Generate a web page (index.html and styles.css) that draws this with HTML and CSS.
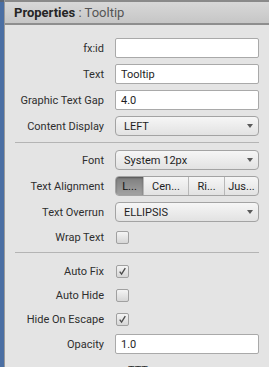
FILE: index.html
```html
<!DOCTYPE html>
<html>
<head>
<meta charset="utf-8">
<link rel="stylesheet" href="styles.css">
</head>
<body>
<div class="strip"></div>
<div class="panel">
  <div class="header"><span class="title">Properties</span><span class="sub"> : Tooltip</span></div>
  <div class="content">
    <div class="row"><label class="lbl">fx:id</label><div class="field"></div></div>
    <div class="row"><label class="lbl">Text</label><div class="field">Tooltip</div></div>
    <div class="row"><label class="lbl">Graphic Text Gap</label><div class="field">4.0</div></div>
    <div class="row"><label class="lbl">Content Display</label><div class="combo"><span>LEFT</span><i class="arrow"></i></div></div>
    <div class="sep"></div>
    <div class="row"><label class="lbl">Font</label><div class="combo"><span>System 12px</span><i class="arrow"></i></div></div>
    <div class="row"><label class="lbl">Text Alignment</label>
      <div class="seg">
        <span class="sb on w1">L...</span><span class="sb w2">Cen...</span><span class="sb w3">Ri...</span><span class="sb w4">Jus...</span>
      </div>
    </div>
    <div class="row"><label class="lbl">Text Overrun</label><div class="combo"><span>ELLIPSIS</span><i class="arrow"></i></div></div>
    <div class="row crow"><label class="lbl">Wrap Text</label><div class="check"></div></div>
    <div class="sep sep2"></div>
    <div class="row crow"><label class="lbl">Auto Fix</label><div class="check"><svg viewBox="0 0 13 13" width="13" height="13"><path d="M3.2 6.6 L5.4 9.6 L9.8 2.6" fill="none" stroke="#4a4a4a" stroke-width="1.6"/></svg></div></div>
    <div class="row crow"><label class="lbl">Auto Hide</label><div class="check"></div></div>
    <div class="row crow"><label class="lbl">Hide On Escape</label><div class="check"><svg viewBox="0 0 13 13" width="13" height="13"><path d="M3.2 6.6 L5.4 9.6 L9.8 2.6" fill="none" stroke="#4a4a4a" stroke-width="1.6"/></svg></div></div>
    <div class="row"><label class="lbl">Opacity</label><div class="field">1.0</div></div>
    <div class="row"><label class="lbl"></label><div class="more">TTT</div></div>
  </div>
</div>
</body>
</html>
```
FILE: styles.css
```css
html, body {
  margin: 0;
  padding: 0;
}
body {
  width: 269px;
  height: 367px;
  overflow: hidden;
  display: flex;
  background: #e4e4e4;
  font-family: Roboto, "Liberation Sans", sans-serif;
  font-size: 11px;
  color: #2e2e2e;
}
.strip {
  width: 4px;
  flex: none;
  background: #4b6fa3;
  border-top: 2px solid #5a6676;
}
.panel {
  flex: 1;
  border-left: 1px solid #9a9a9a;
  display: flex;
  flex-direction: column;
}
.header {
  height: 21px;
  border-top: 2px solid #8a8a8a;
  border-bottom: 2px solid #8e8e8e;
  background: linear-gradient(#d8d8d8, #c6c6c6);
  padding-left: 9px;
  display: flex;
  align-items: center;
  font-size: 13px;
  flex: none;
}
.title {
  font-weight: bold;
  color: #262626;
}
.sub {
  color: #555;
  white-space: pre;
}
.content {
  padding-top: 10px;
  display: flex;
  flex-direction: column;
}
.row {
  height: 26px;
  flex: none;
  display: grid;
  grid-template-columns: 99px 144px;
  column-gap: 11px;
  align-items: center;
}
.crow {
  height: 24px;
}
.lbl {
  text-align: right;
  white-space: nowrap;
}
.field {
  height: 18px;
  background: #fff;
  border: 1px solid #a9a9a9;
  border-radius: 2px;
  padding-left: 5px;
  display: flex;
  align-items: center;
  color: #1e1e1e;
}
.combo {
  height: 18px;
  border: 1px solid #a3a3a3;
  border-radius: 4px;
  background: linear-gradient(#f6f6f6, #e2e2e2);
  display: flex;
  align-items: center;
  justify-content: space-between;
  padding: 0 5px 0 8px;
  color: #1e1e1e;
}
.arrow {
  width: 0;
  height: 0;
  border-left: 3.5px solid transparent;
  border-right: 3.5px solid transparent;
  border-top: 4px solid #5a5a5a;
}
.sep {
  height: 1px;
  flex: none;
  background: #b4b4b4;
  margin: 3px 10px 4px 10px;
}
.sep2 {
  margin-top: 3px;
  margin-bottom: 6px;
}
.seg {
  height: 18px;
  border: 1px solid #a3a3a3;
  border-radius: 4px;
  background: linear-gradient(#f6f6f6, #e2e2e2);
  display: flex;
  overflow: hidden;
}
.sb {
  display: flex;
  align-items: center;
  justify-content: center;
  border-left: 1px solid #b8b8b8;
  color: #1e1e1e;
}
.sb.on {
  border-left: none;
  background: linear-gradient(#7e7e7e, #a2a2a2);
  box-shadow: inset 0 1px 2px rgba(0,0,0,0.35);
  color: #111;
}
.w1 { width: 27px; }
.w2 { width: 44px; }
.w3 { width: 35px; }
.w4 { flex: 1; }
.check {
  width: 13px;
  height: 13px;
  margin-left: 1px;
  border: 1px solid #a0a0a0;
  border-radius: 2px;
  background: linear-gradient(#f4f4f4, #d6d6d6);
  box-sizing: border-box;
  display: flex;
  align-items: center;
  justify-content: center;
}
.check svg {
  display: block;
}
.more {
  padding-left: 13px;
}
```
